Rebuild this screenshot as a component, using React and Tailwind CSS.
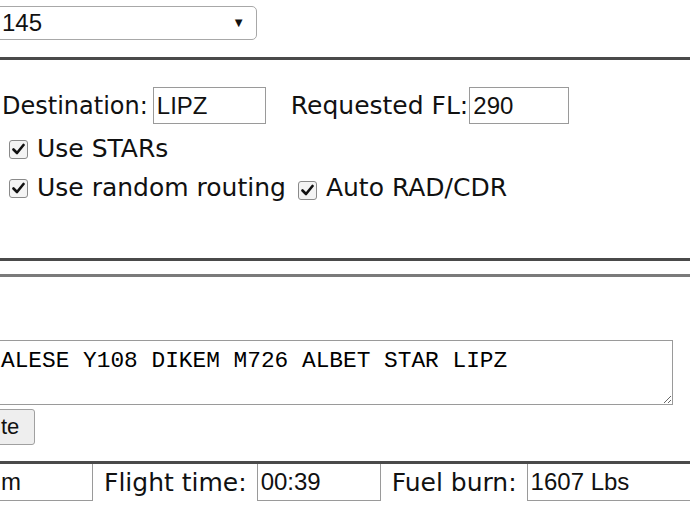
import React from "react";

const Check = () => (
  <span className="inline-flex items-center justify-center w-[19px] h-[19px] border-[1.5px] border-[#8a8a8a] rounded-[3px] bg-[#f4f4f4] shrink-0">
    <svg width="13" height="12" viewBox="0 0 13 12">
      <path d="M1.5 6.5 L5 10 L11.5 2" fill="none" stroke="#111" strokeWidth="2.6" strokeLinecap="round" strokeLinejoin="round" />
    </svg>
  </span>
);

const Field = ({ value, className = "" }) => (
  <div
    className={`shrink-0 h-[37px] border-[1.5px] border-[#9a9a9a] bg-white flex items-center pl-[3px] font-['Liberation_Sans',Arial,sans-serif] text-[24px] text-[#111] ${className}`}
  >
    {value}
  </div>
);

const Rule = ({ color = "bg-[#4a4a4a]" }) => <div className={`h-[3px] ${color}`} />;

export default function App() {
  return (
    <div className="w-[690px] h-[518px] overflow-hidden bg-white text-[#111] font-['DejaVu_Sans',Verdana,sans-serif] text-[25px] whitespace-nowrap">
      {/* aircraft select */}
      <div className="h-[57px] pt-[6px]">
        <div className="-ml-[6px] w-[263px] h-[34px] border-[1.5px] border-[#a8a8a8] rounded-[5px] flex items-center justify-between pl-[7px] pr-[11px] font-['Liberation_Sans',Arial,sans-serif] text-[24px]">
          <span>145</span>
          <span className="text-[13px]">▼</span>
        </div>
      </div>
      <Rule />

      {/* route options */}
      <div className="h-[198px] pt-[27px]">
        <div className="flex items-center h-[37px]">
          <span className="pl-[2px] pr-[5px] text-[24px] shrink-0">Destination:</span>
          <Field value="LIPZ" className="w-[113px]" />
          <span className="pl-[25px] pr-[1px] shrink-0">Requested FL:</span>
          <Field value="290" className="w-[100px]" />
        </div>
        <div className="flex items-center gap-[9px] pl-[9px] mt-[14px] h-[22px]">
          <Check />
          <span>Use STARs</span>
        </div>
        <div className="flex items-center pl-[9px] mt-[17px] h-[22px]">
          <Check />
          <span className="ml-[9px]">Use random routing</span>
          <span className="ml-[12px]"><Check /></span>
          <span className="ml-[9px]">Auto RAD/CDR</span>
        </div>
      </div>
      <Rule />
      <div className="h-[13px]" />
      <Rule color="bg-[#7a7a7a]" />

      {/* route string */}
      <div className="pt-[63px]">
        <textarea
          readOnly
          defaultValue="ALESE Y108 DIKEM M726 ALBET STAR LIPZ"
          className="block -ml-[3px] w-[676px] h-[65px] border-[1.5px] border-[#9a9a9a] pt-[6px] pl-[3px] font-['Liberation_Mono',monospace] text-[22.8px] leading-[28px] text-black outline-none"
        />
        <div className="mt-[2px] h-[54px]">
          <button className="-ml-[4px] h-[36px] w-[39px] border-[1.5px] border-[#a0a0a0] rounded-[3px] bg-[#eeeeee] pl-[4px] text-left font-['Liberation_Sans',Arial,sans-serif] text-[22px]">
            te
          </button>
        </div>
      </div>
      <Rule />

      {/* results */}
      <div className="flex items-center h-[37px]">
        <Field value="m" className="-ml-[3px] w-[96px] border-t-0" />
        <span className="pl-[11px] pr-[10px] shrink-0">Flight time:</span>
        <Field value="00:39" className="w-[124px] border-t-0" />
        <span className="pl-[11px] pr-[10px] shrink-0">Fuel burn:</span>
        <Field value="1607 Lbs" className="w-[170px] border-t-0" />
      </div>
    </div>
  );
}
